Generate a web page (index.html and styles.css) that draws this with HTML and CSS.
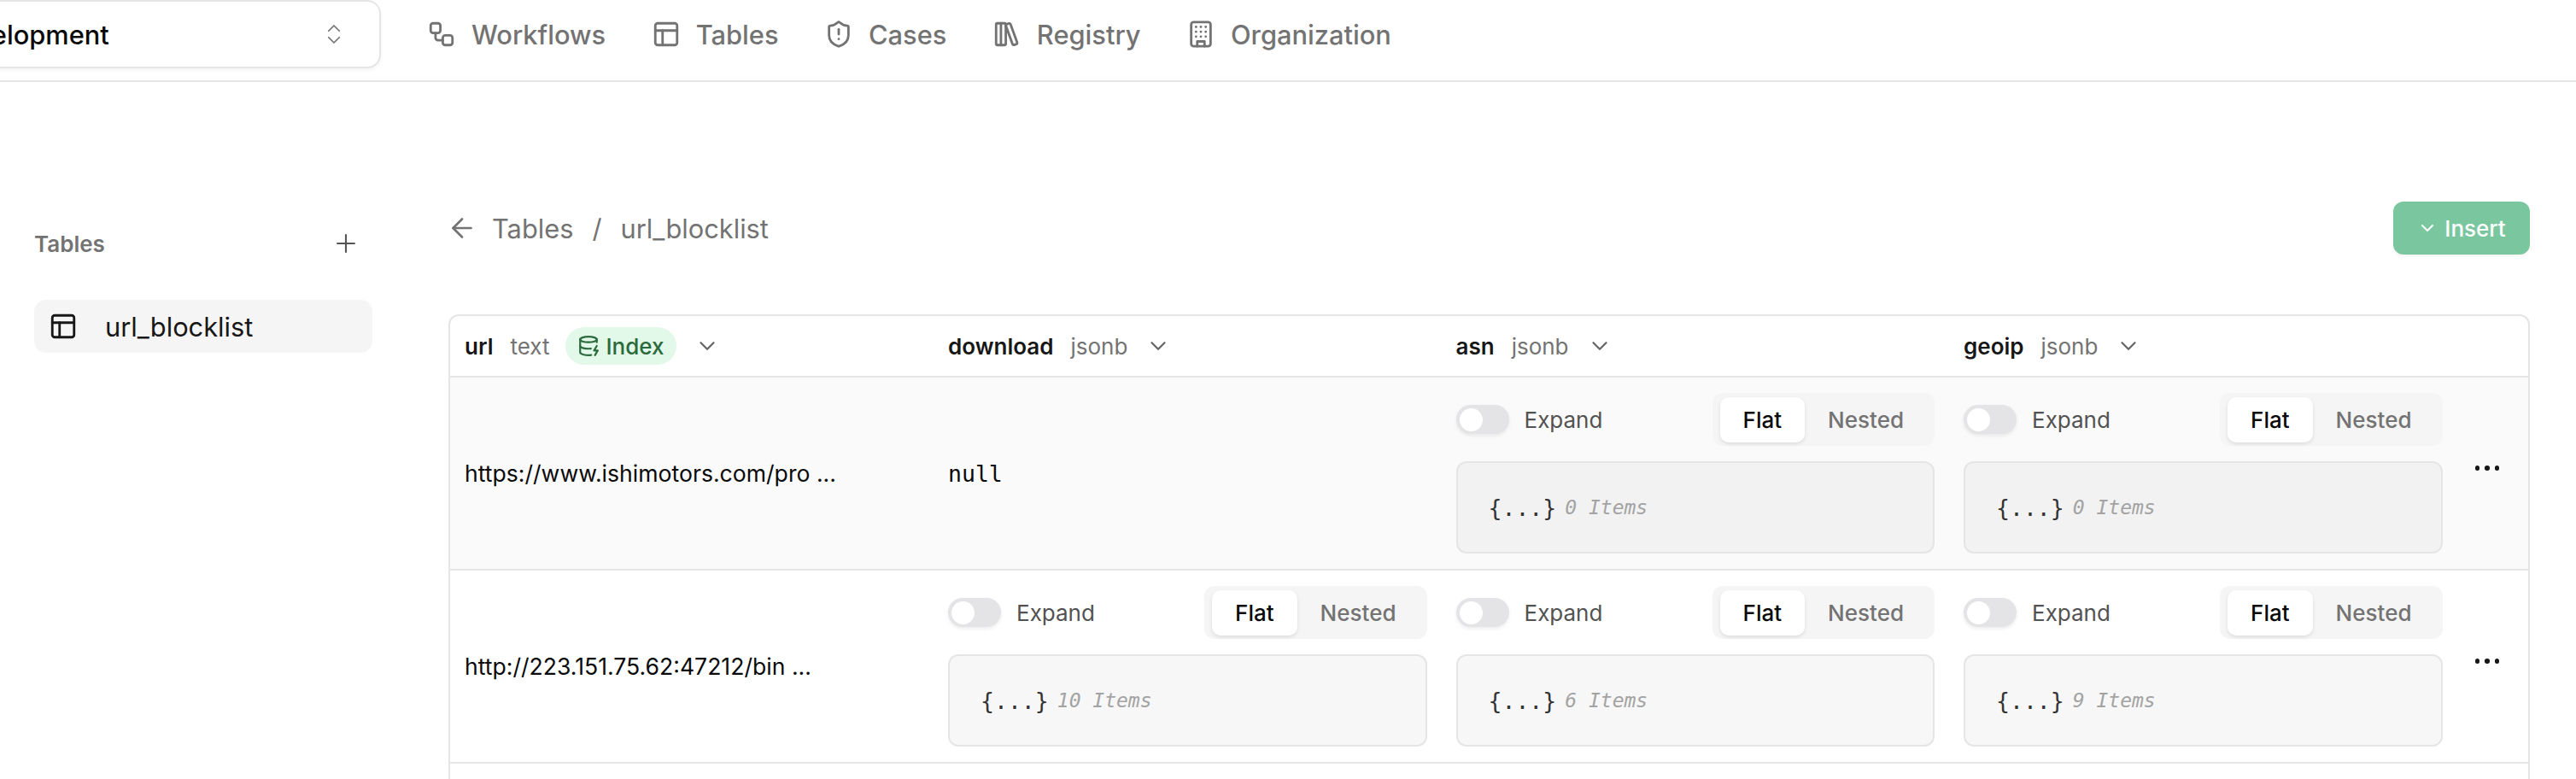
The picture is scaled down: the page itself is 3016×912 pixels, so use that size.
FILE: index.html
```html
<!DOCTYPE html>
<html lang="en">
<head>
    <meta charset="UTF-8">
    <title>Tables - url_blocklist</title>
    <link rel="stylesheet" href="styles.css">
</head>
<body>
    <header class="topbar">
        <button class="workspace">
            <span>Development</span>
            <svg class="icon-sel" viewBox="0 0 24 24"><path d="m7 15 5 5 5-5"/><path d="m7 9 5-5 5 5"/></svg>
        </button>
        <nav class="nav">
            <a class="nav-link"><svg class="icon" viewBox="0 0 24 24"><rect x="3" y="3" width="8" height="8" rx="2"/><path d="M7 11v4a2 2 0 0 0 2 2h4"/><rect x="13" y="13" width="8" height="8" rx="2"/></svg>Workflows</a>
            <a class="nav-link"><svg class="icon" viewBox="0 0 24 24"><rect x="3" y="3" width="18" height="18" rx="2"/><path d="M3 9h18"/><path d="M9 9v12"/></svg>Tables</a>
            <a class="nav-link"><svg class="icon" viewBox="0 0 24 24"><path d="M20 13c0 5-3.5 7.5-7.66 8.95a1 1 0 0 1-.67-.01C7.5 20.5 4 18 4 13V6a1 1 0 0 1 1-1c2 0 4.5-1.2 6.24-2.72a1.17 1.17 0 0 1 1.52 0C14.51 3.81 17 5 19 5a1 1 0 0 1 1 1z"/><path d="M12 8v4"/><path d="M12 16h.01"/></svg>Cases</a>
            <a class="nav-link"><svg class="icon" viewBox="0 0 24 24"><rect x="3" y="3" width="8" height="18" rx="1"/><path d="M7 3v18"/><path d="M20.4 18.9c.2.5-.1 1.1-.6 1.3l-1.9.7c-.5.2-1.1-.1-1.3-.6L11.1 5.1c-.2-.5.1-1.1.6-1.3l1.9-.7c.5-.2 1.1.1 1.3.6Z"/></svg>Registry</a>
            <a class="nav-link"><svg class="icon" viewBox="0 0 24 24"><rect x="4" y="2" width="16" height="20" rx="2"/><path d="M9 22v-4h6v4"/><path d="M8 6h.01M12 6h.01M16 6h.01M8 10h.01M12 10h.01M16 10h.01M8 14h.01M12 14h.01M16 14h.01"/></svg>Organization</a>
        </nav>
    </header>

    <div class="page">
        <aside class="sidebar">
            <div class="sidebar-head">
                <span>Tables</span>
                <svg class="icon-plus" viewBox="0 0 24 24"><path d="M5 12h14"/><path d="M12 5v14"/></svg>
            </div>
            <div class="sidebar-item">
                <svg class="icon" viewBox="0 0 24 24"><rect x="3" y="3" width="18" height="18" rx="2"/><path d="M3 9h18"/><path d="M9 9v12"/></svg>
                <span>url_blocklist</span>
            </div>
        </aside>

        <main class="content">
            <div class="toolbar">
                <div class="crumbs">
                    <svg class="icon-back" viewBox="0 0 24 24"><path d="m12 19-7-7 7-7"/><path d="M19 12H5"/></svg>
                    <span>Tables</span>
                    <span>/</span>
                    <span>url_blocklist</span>
                </div>
                <button class="insert"><svg class="icon-ins" viewBox="0 0 24 24"><path d="m6 9 6 6 6-6"/></svg>Insert</button>
            </div>

            <div class="table">
                <div class="row head">
                    <div class="cell">
                        <b>url</b><span class="type">text</span>
                        <span class="badge"><svg viewBox="0 0 24 24"><ellipse cx="12" cy="5" rx="9" ry="3"/><path d="M3 5v14a9 3 0 0 0 12 2.84"/><path d="M21 5v3"/><path d="m21 12-3 5h4l-3 5"/><path d="M3 12a9 3 0 0 0 11.59 2.87"/></svg>Index</span>
                        <svg class="chev" viewBox="0 0 24 24"><path d="m6 9 6 6 6-6"/></svg>
                    </div>
                    <div class="cell"><b>download</b><span class="type">jsonb</span><svg class="chev" viewBox="0 0 24 24"><path d="m6 9 6 6 6-6"/></svg></div>
                    <div class="cell"><b>asn</b><span class="type">jsonb</span><svg class="chev" viewBox="0 0 24 24"><path d="m6 9 6 6 6-6"/></svg></div>
                    <div class="cell"><b>geoip</b><span class="type">jsonb</span><svg class="chev" viewBox="0 0 24 24"><path d="m6 9 6 6 6-6"/></svg></div>
                    <div class="cell"></div>
                </div>

                <div class="row body odd">
                    <div class="cell url">https://www.ishimotors.com/pro ...</div>
                    <div class="cell mono">null</div>
                    <div class="cell json">
                        <div class="controls"><span class="switch"></span><span class="expand">Expand</span><div class="seg"><span class="on">Flat</span><span>Nested</span></div></div>
                        <div class="jsonbox">{...}<i>0 Items</i></div>
                    </div>
                    <div class="cell json">
                        <div class="controls"><span class="switch"></span><span class="expand">Expand</span><div class="seg"><span class="on">Flat</span><span>Nested</span></div></div>
                        <div class="jsonbox">{...}<i>0 Items</i></div>
                    </div>
                    <div class="cell more"><span></span><span></span><span></span></div>
                </div>

                <div class="row body">
                    <div class="cell url">http://223.151.75.62:47212/bin ...</div>
                    <div class="cell json">
                        <div class="controls"><span class="switch"></span><span class="expand">Expand</span><div class="seg"><span class="on">Flat</span><span>Nested</span></div></div>
                        <div class="jsonbox">{...}<i>10 Items</i></div>
                    </div>
                    <div class="cell json">
                        <div class="controls"><span class="switch"></span><span class="expand">Expand</span><div class="seg"><span class="on">Flat</span><span>Nested</span></div></div>
                        <div class="jsonbox">{...}<i>6 Items</i></div>
                    </div>
                    <div class="cell json">
                        <div class="controls"><span class="switch"></span><span class="expand">Expand</span><div class="seg"><span class="on">Flat</span><span>Nested</span></div></div>
                        <div class="jsonbox">{...}<i>9 Items</i></div>
                    </div>
                    <div class="cell more"><span></span><span></span><span></span></div>
                </div>

                <!-- only the top edge of this row is on screen -->
                <div class="row last">
                    <div class="cell"></div>
                    <div class="cell json"><div class="seg seg-empty"></div></div>
                    <div class="cell json"><div class="seg seg-empty"></div></div>
                    <div class="cell json"><div class="seg seg-empty"></div></div>
                    <div class="cell"></div>
                </div>
            </div>
        </main>
    </div>
</body>
</html>
```

FILE: styles.css
```css
html, body {
    height: 912px;
    overflow: hidden;
}
body {
    margin: 0;
    background: #fff;
    color: #0a0a0a;
    font-family: Inter, "Liberation Sans", sans-serif;
    font-size: 30.8px;
}
svg {
    fill: none;
    stroke: currentColor;
    stroke-width: 2;
    stroke-linecap: round;
    stroke-linejoin: round;
    flex: none;
}

/* top bar */
.topbar {
    display: flex;
    height: 94px;
    border-bottom: 2px solid #e5e5e5;
}
.workspace {
    display: flex;
    align-items: center;
    justify-content: space-between;
    width: 521px;
    height: 80px;
    margin-left: -75px;
    padding: 0 38px 0 6px;
    background: #fff;
    border: 2px solid #e5e5e5;
    border-radius: 16px;
    box-shadow: 0 2px 4px rgba(0, 0, 0, 0.05);
    font: 500 30.8px Inter, sans-serif;
    color: #0a0a0a;
}
.icon-sel {
    width: 30px;
    height: 30px;
    stroke: #737373;
    stroke-width: 1.4;
}
.nav {
    display: flex;
    align-items: center;
    gap: 53.5px;
    height: 80px;
    margin-left: 54px;
}
.nav-link {
    display: flex;
    align-items: center;
    gap: 18px;
    color: #737373;
    font-weight: 500;
}
.icon {
    width: 34px;
    height: 34px;
}

/* page */
.page {
    display: flex;
}
.sidebar {
    width: 396px;
    margin-left: 40px;
    flex: none;
}
.sidebar-head {
    display: flex;
    align-items: center;
    justify-content: space-between;
    height: 40px;
    margin-top: 169px;
    padding-right: 14px;
    color: #737373;
    font-size: 26px;
    font-weight: 600;
}
.icon-plus {
    width: 34px;
    height: 34px;
    stroke-width: 1.5;
    color: #555;
}
.sidebar-item {
    display: flex;
    align-items: center;
    gap: 32px;
    height: 62px;
    margin-top: 46px;
    padding-left: 17px;
    background: #f5f5f5;
    border-radius: 14px;
    color: #171717;
}
.content {
    width: 2437px;
    margin-left: 89px;
    flex: none;
}
.toolbar {
    display: flex;
    align-items: center;
    justify-content: space-between;
    height: 62px;
    margin-top: 140px;
}
.crumbs {
    display: flex;
    align-items: center;
    gap: 22px;
    color: #737373;
    margin-left: -2px;
}
.icon-back {
    width: 36px;
    height: 36px;
    margin-right: -5px;
    stroke-width: 1.8;
}
.insert {
    display: flex;
    align-items: center;
    justify-content: center;
    gap: 8px;
    width: 160px;
    height: 62px;
    padding: 0;
    background: #7ac79f;
    border: 0;
    border-radius: 12px;
    box-shadow: 0 2px 4px rgba(0, 0, 0, 0.05);
    color: #fff;
    font: 500 26px Inter, sans-serif;
}
.icon-ins {
    width: 24px;
    height: 24px;
}

/* table */
.table {
    margin-top: 70px;
    border: 2px solid #e5e5e5;
    border-bottom: 0;
    border-radius: 12px 12px 0 0;
    font-size: 26px;
}
.row {
    display: grid;
    grid-template-columns: 565px 594.5px 594.5px 594.5px 1fr;
    border-bottom: 2px solid #e5e5e5;
}
.head {
    height: 70px;
}
.head .cell {
    display: flex;
    align-items: center;
    gap: 20px;
    padding-left: 18px;
}
.head .cell:first-child {
    padding-left: 17px;
}
.head b {
    font-weight: 600;
    color: #171717;
}
.type {
    color: #737373;
}
.badge {
    display: flex;
    align-items: center;
    gap: 8px;
    height: 44px;
    margin-left: -2px;
    padding: 0 14px;
    background: #e2f8e8;
    border-radius: 22px;
    color: #2a6a3c;
    font-weight: 500;
}
.badge svg {
    width: 26px;
    height: 26px;
}
.chev {
    width: 30px;
    height: 30px;
    margin-left: 1px;
    color: #666;
    stroke-width: 1.8;
}
.body {
    height: 224px;
}
.odd {
    background: #fafafa;
}
.last {
    height: 19px;
    overflow: hidden;
    border-bottom: 0;
}
.cell {
    min-width: 0;
}
.url {
    display: flex;
    align-items: center;
    padding-left: 17px;
    font-size: 26.6px;
    color: #0a0a0a;
}
.mono {
    display: flex;
    align-items: center;
    padding-left: 18px;
    font-family: "DejaVu Sans Mono", monospace;
    font-size: 26.5px;
}
.json {
    padding: 18px 16px 0 18px;
}
.controls {
    display: flex;
    align-items: center;
    height: 62px;
}
.switch {
    position: relative;
    width: 62px;
    height: 34px;
    background: #e4e4e7;
    border-radius: 17px;
    box-shadow: 0 2px 4px rgba(0, 0, 0, 0.08);
}
.switch::after {
    content: "";
    position: absolute;
    top: 4px;
    left: 4px;
    width: 27px;
    height: 27px;
    background: #fff;
    border-radius: 50%;
}
.expand {
    margin-left: 18px;
    color: #525252;
}
.seg {
    display: flex;
    align-items: center;
    height: 62px;
    margin-left: auto;
    padding: 0 9px;
    background: #f5f5f5;
    border-radius: 12px;
    color: #737373;
    font-weight: 500;
}
.seg span {
    padding: 0 27px;
    line-height: 53px;
}
.seg .on {
    background: #fff;
    border-radius: 10px;
    box-shadow: 0 2px 4px rgba(0, 0, 0, 0.1);
    color: #0a0a0a;
}
.seg-empty {
    width: 259px;
    padding: 0;
}
.jsonbox {
    display: flex;
    align-items: center;
    height: 108px;
    margin-top: 18px;
    padding: 0 36px;
    box-sizing: border-box;
    background: #f7f7f7;
    border: 2px solid #e5e5e5;
    border-radius: 12px;
    color: #333;
    font: 26.5px "DejaVu Sans Mono", monospace;
}
.odd .jsonbox {
    background: #f2f2f2;
}
.jsonbox i {
    margin-left: 10px;
    color: #a3a3a3;
    font-size: 23px;
}
.more {
    display: flex;
    align-items: center;
    justify-content: center;
    gap: 6px;
    padding: 0 12px 12px 0;
}
.more span {
    width: 5.5px;
    height: 5.5px;
    background: #171717;
    border-radius: 50%;
}
```
